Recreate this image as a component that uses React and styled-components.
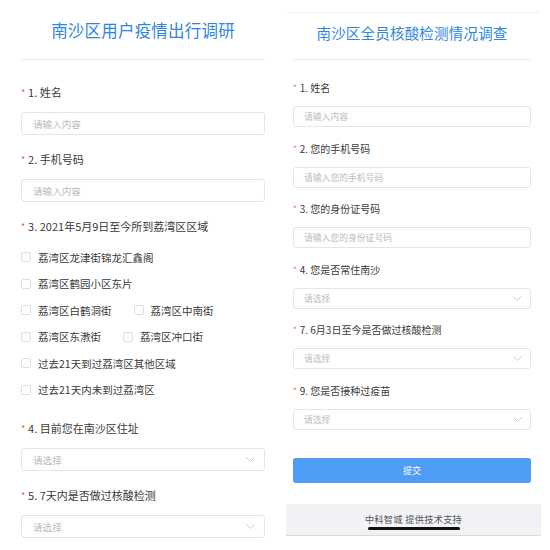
import React from 'react'
import styled, { createGlobalStyle, ThemeProvider } from 'styled-components'

const GlobalStyle = createGlobalStyle`
  html, body {
    margin: 0;
    padding: 0;
    background: #fff;
  }
  body {
    font-family: "Noto Sans CJK SC", "Noto Sans", sans-serif;
    color: #333;
  }
`

const wide = {
  titleSize: '16.5px',
  labelSize: '11px',
  labelGap: '10px',
  inputHeight: '23px',
  fieldGap: '14px',
  holderSize: '9.6px',
  padX: '11px',
  chevronRight: '9px',
}

const narrow = {
  titleSize: '14.5px',
  labelSize: '10px',
  labelGap: '8px',
  inputHeight: '21px',
  fieldGap: '11.5px',
  holderSize: '8.8px',
  padX: '10px',
  chevronRight: '8px',
}

const Page = styled.div`
  display: flex;
  width: 550px;
  height: 550px;
  overflow: hidden;
`

const LeftPanel = styled.section`
  width: 286px;
  box-sizing: border-box;
  padding: 0 21px;
`

const RightPanel = styled.section`
  width: 255px;
  box-sizing: border-box;
  margin-top: 12px;
  border-top: 1px solid #f1f1f1;
  display: flex;
  flex-direction: column;
`

const RightBody = styled.div`
  padding: 0 10px 0 7px;
`

const Title = styled.h1`
  margin: 0;
  font-weight: 400;
  font-size: ${(p) => p.theme.titleSize};
  color: #2f86df;
  text-align: center;
  letter-spacing: 0.2px;
  line-height: ${(p) => (p.$top ? '24px' : '20px')};
  padding: ${(p) => (p.$top ? '18px 0 17px' : '10px 0 16px')};
  border-bottom: 1px solid #eeeeee;
`

const Form = styled.div`
  display: flex;
  flex-direction: column;
  padding-top: ${(p) => p.$pad};
`

const Field = styled.div`
  display: flex;
  flex-direction: column;
  gap: ${(p) => p.theme.labelGap};
  margin-bottom: ${(p) => p.theme.fieldGap};
`

const Label = styled.div`
  font-size: ${(p) => p.theme.labelSize};
  line-height: 20px;
  height: 20px;
  color: #3a3a3a;
  white-space: nowrap;
`

const Star = styled.span`
  color: #e8584f;
  font-size: 0.8em;
  margin-right: 3px;
  position: relative;
  top: -1px;
`

const Box = styled.div`
  height: ${(p) => p.theme.inputHeight};
  box-sizing: border-box;
  border: 1px solid #e3e5ea;
  border-radius: 3px;
  display: flex;
  align-items: center;
  justify-content: space-between;
  padding: 0 ${(p) => p.theme.chevronRight} 0 ${(p) => p.theme.padX};
  font-size: ${(p) => p.theme.holderSize};
  color: #b9bcc2;
  background: #fff;
`

const Chevron = styled.svg`
  width: 9px;
  height: 5px;
  flex: none;
`

const Group = styled.div`
  display: flex;
  flex-direction: column;
  margin-top: -6px;
  margin-bottom: 15px;
`

const Row = styled.div`
  display: flex;
  align-items: center;
  height: 26.5px;
`

const Option = styled.label`
  display: flex;
  align-items: center;
  gap: 7px;
  margin-right: 22px;
  font-size: 10.5px;
  color: #3a3a3a;
  white-space: nowrap;
`

const Tick = styled.span`
  width: 10px;
  height: 10px;
  box-sizing: border-box;
  border: 1px solid #dcdfe6;
  border-radius: 2px;
  background: #fff;
`

const Submit = styled.button`
  height: 25px;
  margin-top: 17px;
  border: none;
  border-radius: 3px;
  background: #4f9cf6;
  color: #fff;
  font-family: inherit;
  font-size: 9px;
`

const Footer = styled.footer`
  margin-top: 21px;
  height: 32px;
  box-sizing: border-box;
  background: #f1f2f5;
  border-bottom: 1px solid #dadbdf;
  display: flex;
  flex-direction: column;
  align-items: center;
  padding-top: 8px;
`

const FooterText = styled.span`
  font-size: 9.2px;
  line-height: 14px;
  color: #555;
  letter-spacing: 0.3px;
`

const HomeBar = styled.span`
  width: 92px;
  height: 3px;
  margin-top: 1px;
  border-radius: 2px;
  background: #111;
`

const Input = ({ placeholder }) => <Box>{placeholder}</Box>

const Select = () => (
  <Box>
    请选择
    <Chevron viewBox="0 0 9 5">
      <polyline points="0.5,0.5 4.5,4.5 8.5,0.5" fill="none" stroke="#c3c6cc" strokeWidth="0.9" />
    </Chevron>
  </Box>
)

const Question = ({ label, children }) => (
  <Field>
    <Label>
      <Star>*</Star>
      {label}
    </Label>
    {children}
  </Field>
)

const areaRows = [
  ['荔湾区龙津街锦龙汇鑫阁'],
  ['荔湾区鹤园小区东片'],
  ['荔湾区白鹤洞街', '荔湾区中南街'],
  ['荔湾区东漖街', '荔湾区冲口街'],
  ['过去21天到过荔湾区其他区域'],
  ['过去21天内未到过荔湾区'],
]

const TravelSurvey = () => (
  <ThemeProvider theme={wide}>
    <LeftPanel>
      <Title $top>南沙区用户疫情出行调研</Title>
      <Form $pad="22px">
        <Question label="1. 姓名">
          <Input placeholder="请输入内容" />
        </Question>
        <Question label="2. 手机号码">
          <Input placeholder="请输入内容" />
        </Question>
        <Question label="3. 2021年5月9日至今所到荔湾区区域" />
        <Group>
          {areaRows.map((row) => (
            <Row key={row[0]}>
              {row.map((item) => (
                <Option key={item}>
                  <Tick />
                  {item}
                </Option>
              ))}
            </Row>
          ))}
        </Group>
        <Question label="4. 目前您在南沙区住址">
          <Select />
        </Question>
        <Question label="5. 7天内是否做过核酸检测">
          <Select />
        </Question>
      </Form>
    </LeftPanel>
  </ThemeProvider>
)

const TestSurvey = () => (
  <ThemeProvider theme={narrow}>
    <RightPanel>
      <RightBody>
        <Title>南沙区全员核酸检测情况调查</Title>
        <Form $pad="18px">
          <Question label="1. 姓名">
            <Input placeholder="请输入内容" />
          </Question>
          <Question label="2. 您的手机号码">
            <Input placeholder="请输入您的手机号码" />
          </Question>
          <Question label="3. 您的身份证号码">
            <Input placeholder="请输入您的身份证号码" />
          </Question>
          <Question label="4. 您是否常住南沙">
            <Select />
          </Question>
          <Question label="7. 6月3日至今是否做过核酸检测">
            <Select />
          </Question>
          <Question label="9. 您是否接种过疫苗">
            <Select />
          </Question>
          <Submit>提交</Submit>
        </Form>
      </RightBody>
      <Footer>
        <FooterText>中科智城 提供技术支持</FooterText>
        <HomeBar />
      </Footer>
    </RightPanel>
  </ThemeProvider>
)

export default function App() {
  return (
    <>
      <GlobalStyle />
      <Page>
        <TravelSurvey />
        <TestSurvey />
      </Page>
    </>
  )
}
